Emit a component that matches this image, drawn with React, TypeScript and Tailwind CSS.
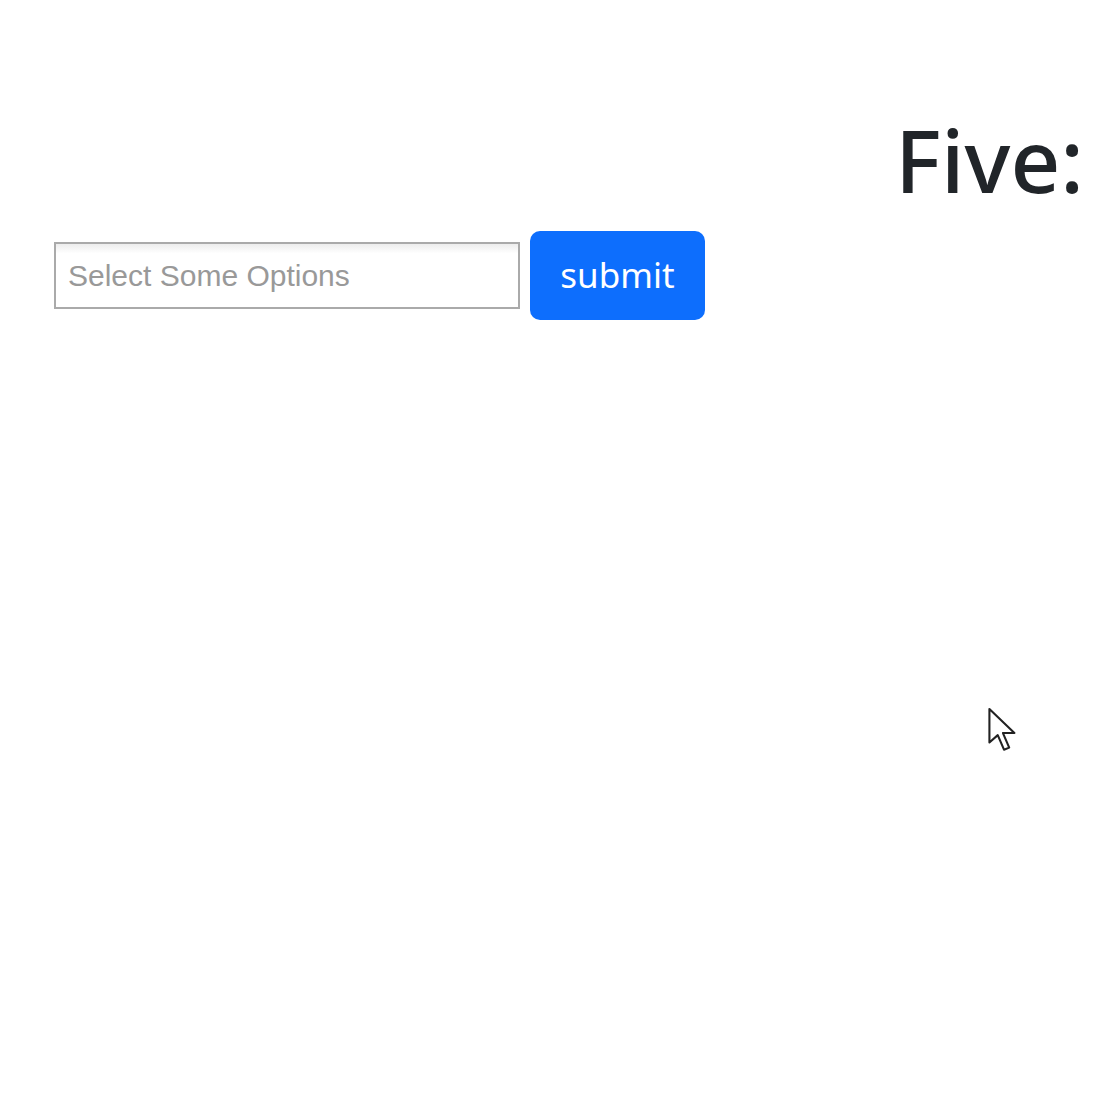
import React from 'react';

const App: React.FC = () => {
  return (
    <div className="relative min-h-[1100px] w-[1100px] bg-white overflow-hidden">
      <div className="pt-[116px] flex justify-end pr-[16px]">
        <h1 className="text-[87px] leading-none font-medium text-[#212529] whitespace-nowrap" style={{ fontFamily: '"Noto Sans", "Open Sans", sans-serif' }}>
          Five:
        </h1>
      </div>

      <form className="mt-[28px] pl-[54px] flex items-center gap-[10px]" onSubmit={(e) => e.preventDefault()}>
        <div className="w-[466px] h-[67px] border-2 border-[#aaaaaa] bg-gradient-to-b from-[#eeeeee] from-[1%] to-white to-[15%] flex items-center pl-[12px]">
          <span className="text-[30px] text-[#999999]" style={{ fontFamily: '"Liberation Sans", Arial, sans-serif' }}>
            Select Some Options
          </span>
        </div>
        <button
          type="submit"
          className="w-[175px] h-[89px] bg-[#0d6efd] text-white rounded-[10px] text-[35px] flex items-center justify-center"
          style={{ fontFamily: '"Noto Sans", "Open Sans", sans-serif' }}
        >
          submit
        </button>
      </form>

      {/* mouse pointer */}
      <svg className="absolute left-[987px] top-[707px]" width="34" height="50" viewBox="0 0 32 48">
        <path
          d="M2 2 L2 34 L10 27 L16 41 L21 39 L15 25 L26 25 Z"
          fill="white"
          stroke="#222"
          strokeWidth="2"
          strokeLinejoin="round"
        />
      </svg>
    </div>
  );
};

export default App;
